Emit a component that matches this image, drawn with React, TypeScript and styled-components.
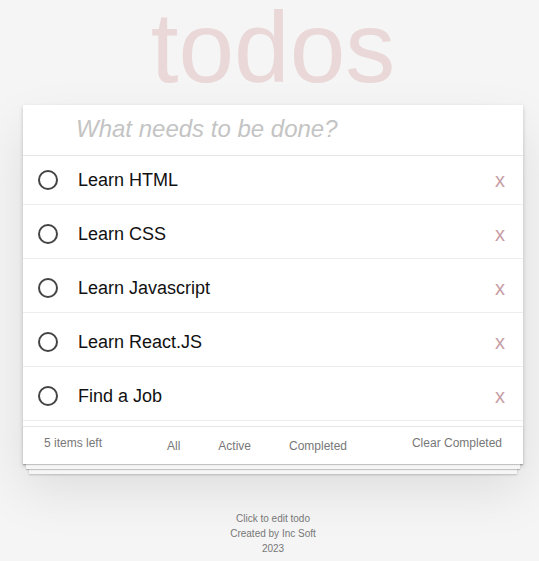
import styled, { createGlobalStyle } from "styled-components";

const todos = [
  { id: 1, title: "Learn HTML" },
  { id: 2, title: "Learn CSS" },
  { id: 3, title: "Learn Javascript" },
  { id: 4, title: "Learn React.JS" },
  { id: 5, title: "Find a Job" },
];

const filters = ["All", "Active", "Completed"];

export default function App() {
  return (
    <>
      <GlobalStyle />
      <Page>
        <Title>todos</Title>
        <Card>
          <Header>
            <NewTodo placeholder="What needs to be done?" readOnly />
          </Header>
          <TodoList>
            {todos.map((todo) => (
              <TodoItem key={todo.id}>
                <Toggle />
                <Label>{todo.title}</Label>
                <Destroy>x</Destroy>
              </TodoItem>
            ))}
          </TodoList>
          <Footer>
            <Count>{todos.length} items left</Count>
            <Filters>
              {filters.map((f) => (
                <FilterLink key={f}>{f}</FilterLink>
              ))}
            </Filters>
            <ClearButton>Clear Completed</ClearButton>
          </Footer>
        </Card>
        <Info>
          <p>Click to edit todo</p>
          <p>Created by Inc Soft</p>
          <p>2023</p>
        </Info>
      </Page>
    </>
  );
}

const GlobalStyle = createGlobalStyle`
  body {
    margin: 0;
    background: #f5f5f5;
    font-family: "Liberation Sans", Arial, sans-serif;
    color: #111;
  }
`;

const Page = styled.div`
  width: 500px;
  margin-left: 23px;
`;

const Title = styled.h1`
  margin: 0;
  height: 105px;
  font-size: 100px;
  line-height: 94px;
  font-weight: 400;
  text-align: center;
  color: rgba(175, 47, 47, 0.15);
`;

const Card = styled.section`
  background: #fff;
  box-shadow: 0 2px 4px 0 rgba(0, 0, 0, 0.2), 0 25px 50px 0 rgba(0, 0, 0, 0.1);
`;

const Header = styled.header`
  height: 50px;
  border-bottom: 1px solid #e6e6e6;
  padding-left: 53px;
  display: flex;
`;

const NewTodo = styled.input`
  flex: 1;
  border: none;
  outline: none;
  background: transparent;
  padding: 0;
  margin: 0;
  height: 48px;
  line-height: 48px;
  font-family: "Liberation Sans", Arial, sans-serif;
  font-size: 24px;
  color: #111;

  &::placeholder {
    font-style: italic;
    color: #c4c4c4;
  }
`;

const TodoList = styled.ul`
  list-style: none;
  margin: 0;
  padding: 0;
`;

const TodoItem = styled.li`
  display: flex;
  align-items: center;
  padding: 19px 18px 14px 15px;
  border-bottom: 1px solid #ededed;

  &:first-child {
    padding-top: 14px;
  }
`;

const Toggle = styled.span`
  box-sizing: border-box;
  width: 20px;
  height: 20px;
  border: 2px solid #444;
  border-radius: 50%;
  flex-shrink: 0;
`;

const Label = styled.span`
  margin-left: 20px;
  font-size: 18px;
  line-height: 19px;
  color: #111;
`;

const Destroy = styled.button`
  margin-left: auto;
  border: none;
  background: none;
  padding: 0;
  font-family: "Liberation Sans", Arial, sans-serif;
  font-size: 20px;
  line-height: 20px;
  color: #c89ea6;
`;

const Footer = styled.footer`
  box-sizing: border-box;
  height: 38px;
  margin-top: 5px;
  padding: 9px 21px 0;
  border-top: 1px solid #e6e6e6;
  display: flex;
  justify-content: space-between;
  align-items: flex-start;
  font-size: 12px;
  line-height: 14px;
  color: #777;
  box-shadow: 0 1px 1px rgba(0, 0, 0, 0.2), 0 8px 0 -3px #f6f6f6,
    0 9px 1px -3px rgba(0, 0, 0, 0.2), 0 16px 0 -6px #f6f6f6,
    0 17px 2px -6px rgba(0, 0, 0, 0.2);
`;

const Count = styled.span``;

const Filters = styled.ul`
  list-style: none;
  margin: 0;
  padding: 3px 0 0;
  display: flex;
  gap: 38px;
`;

const FilterLink = styled.li`
  color: #777;
`;

const ClearButton = styled.button`
  border: none;
  background: none;
  padding: 0;
  font-family: "Liberation Sans", Arial, sans-serif;
  font-size: 12px;
  line-height: 14px;
  color: #777;
`;

const Info = styled.footer`
  margin-top: 47px;
  text-align: center;
  font-size: 10px;
  line-height: 15px;
  color: #777;

  p {
    margin: 0;
  }
`;
